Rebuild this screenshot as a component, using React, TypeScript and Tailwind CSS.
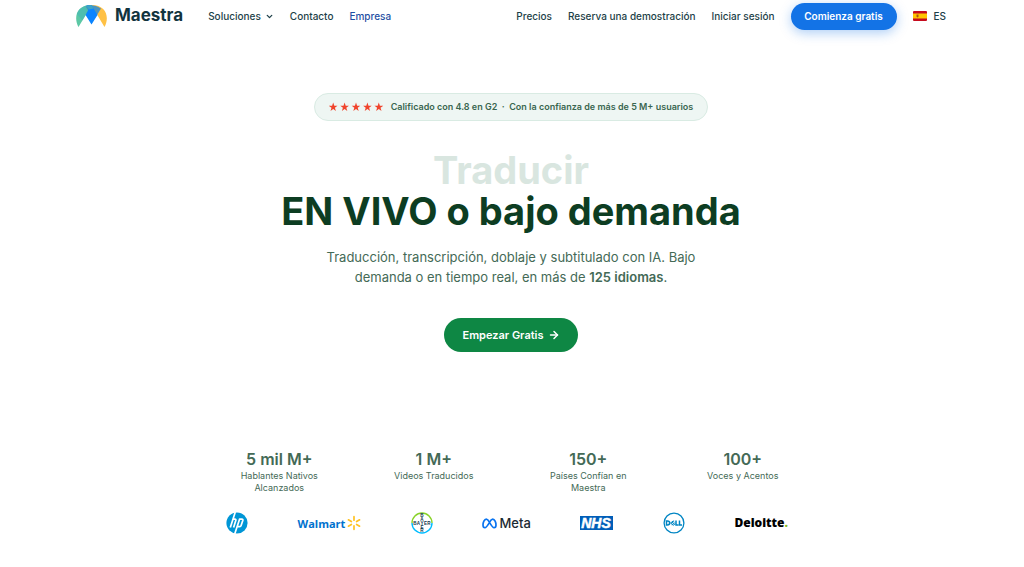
import { ReactNode } from 'react'
import { ArrowRight, ChevronDown } from 'lucide-react'

const stats = [
  { value: '5 mil M+', label: 'Hablantes Nativos Alcanzados' },
  { value: '1 M+', label: 'Videos Traducidos' },
  { value: '150+', label: 'Países Confían en Maestra' },
  { value: '100+', label: 'Voces y Acentos' },
]

export default function App() {
  return (
    <div className="min-h-screen bg-white font-['Inter','Liberation_Sans',sans-serif]">
      <Header />
      <main className="flex flex-col items-center pr-4.5 pl-4">
        <Hero />
        <Stats />
        <Brands />
      </main>
    </div>
  )
}

function Header() {
  return (
    <header className="flex h-8 items-center pr-[78px] pl-19 text-[10px] font-medium text-[#1d3f48]">
      <a href="#" className="flex items-center gap-2 text-[17px] font-bold text-[#12343e]">
        <MaestraMark />
        Maestra
      </a>
      <nav className="ml-[25px] flex flex-1 items-center gap-4">
        <button type="button" className="flex items-center gap-1">
          Soluciones
          <ChevronDown size={9} strokeWidth={3.5} />
        </button>
        <NavLink>Contacto</NavLink>
        <a href="#" className="text-[#1f4fa3]">Empresa</a>
      </nav>
      <div className="flex items-center gap-4">
        <NavLink>Precios</NavLink>
        <NavLink>Reserva una demostración</NavLink>
        <NavLink>Iniciar sesión</NavLink>
        <a href="#" className="flex h-[27px] w-[106px] items-center justify-center rounded-full bg-[#1373e6] font-semibold text-white shadow-[0_3px_12px_rgba(19,115,230,0.35)]">
          Comienza gratis
        </a>
        <button type="button" className="flex items-center gap-[7px]">
          <SpainFlag />
          ES
        </button>
      </div>
    </header>
  )
}

const NavLink = ({ children }: { children: ReactNode }) => (
  <a href="#" className="whitespace-nowrap">{children}</a>
)

function Hero() {
  return (
    <section className="flex flex-col items-center pt-[61px] text-center">
      <div className="flex h-7 items-center gap-2 rounded-full border border-[#d9ebe3] bg-[#eef6f3] px-3.5 text-[9px] font-semibold text-[#3a6650]">
        <Stars />
        <span>Calificado con 4.8 en G2 &nbsp;·&nbsp; Con la confianza de más de 5 M+ usuarios</span>
      </div>
      <h1 className="mt-[29px] text-[38px] leading-[41px] font-bold text-[#0d3d22]">
        <span className="block text-[#d9e6e0]">Traducir</span>
        EN VIVO o bajo demanda
      </h1>
      <p className="mt-[15px] max-w-[390px] text-[13px] leading-5 text-[#446a56]">
        Traducción, transcripción, doblaje y subtitulado con IA. Bajo demanda o en tiempo real, en más de{' '}
        <strong className="font-semibold">125 idiomas</strong>.
      </p>
      <a href="#" className="mt-[31px] flex h-[34px] items-center gap-1 rounded-full bg-[#0e8744] px-[18px] text-[11px] font-semibold text-white">
        Empezar Gratis
        <ArrowRight size={12} strokeWidth={3} />
      </a>
    </section>
  )
}

function Stats() {
  return (
    <dl className="mt-[97px] grid w-full max-w-[618px] grid-cols-4 text-center text-[#446a56]">
      {stats.map((s) => (
        <div key={s.label} className="flex flex-col-reverse items-center justify-end">
          <dt className="max-w-24 text-[9px] leading-3">{s.label}</dt>
          <dd className="text-base leading-[21px] font-semibold">{s.value}</dd>
        </div>
      ))}
    </dl>
  )
}

function Brands() {
  return (
    <div className="mt-[18px] flex w-full max-w-[570px] items-center justify-between pr-2">
      <HpLogo />
      <WalmartLogo />
      <BayerLogo />
      <MetaLogo />
      <NhsLogo />
      <DellLogo />
      <div className="text-[12px] leading-none font-extrabold text-black font-['Open_Sans',sans-serif]">
        Deloitte<span className="text-[#86bc25]">.</span>
      </div>
    </div>
  )
}

const MaestraMark = () => (
  <svg width="31" height="24" viewBox="0 0 31 24" aria-hidden="true">
    <path d="M2.500 23C-2.500 14 0 1 15.500 1L16 6 10 10.500Z" fill="#5cc8a5" />
    <path d="M.8 10C3 4 8 1 15.500 1L10 10.500 6.500 16.500Z" fill="#46b8b3" opacity=".65" />
    <path d="M28.500 23C33.500 14 31 1 15.500 1L15 6 21 10.500Z" fill="#ffc145" />
    <path d="M9.500 2.200C13.500.6 19.500.6 25 4.500L21 11H15Z" fill="#4c93bd" />
    <path d="M10.500 1.800C12 1.200 14 1 15.500 1L21.500 11 15.500 20.500 9.500 11 12.500 5.500Z" fill="#0a84ff" />
    <path d="M10 2C12 1.200 14 1 15.500 1L17.500 4.500 13 5.500Z" fill="#3da3c5" />
  </svg>
)

const SpainFlag = () => (
  <svg width="14" height="10" viewBox="0 0 14 10" aria-hidden="true">
    <rect width="14" height="10" rx="1" fill="#c60b1e" />
    <rect y="2.500" width="14" height="5" fill="#ffc400" />
    <path d="M3.500 3.500h2v2.200l-1 .8-1-.8z" fill="#ad5118" />
  </svg>
)

const Stars = () => (
  <svg width="54" height="10" viewBox="0 0 54 10" fill="#f0442c" role="img" aria-label="5 estrellas">
    {[0, 1, 2, 3, 4].map((i) => (
      <path key={i} transform={`translate(${i * 11.4} 0)`} d="M4.200.6l1.100 3.200h3.200L5.900 5.800l1 3.200-2.700-2-2.700 2 1-3.200L-.1 3.800h3.200z" />
    ))}
  </svg>
)

const HpLogo = () => (
  <svg width="22" height="22" viewBox="0 0 22 22" role="img" aria-label="HP">
    <circle cx="11" cy="11" r="10.600" fill="#0096d6" />
    <g fill="none" stroke="#fff" strokeWidth="1.700">
      <path d="M9.300 0L4.300 15.500M6.900 7.200H8.900Q10.200 7.200 9.800 8.500L7.600 15.500" />
      <path d="M13.800 6.500L8.700 22M13.600 7.200H15.900Q17.200 7.200 16.800 8.500L15.100 13.600Q14.800 14.700 13.600 14.700H11.300" />
    </g>
  </svg>
)

const WalmartLogo = () => (
  <div className="flex items-center gap-0.5 text-[11px] leading-none font-bold text-[#0071ce] font-['Open_Sans',sans-serif]">
    Walmart
    <svg width="14" height="16" viewBox="0 0 15 16" aria-hidden="true" stroke="#ffc220" strokeWidth="1.800" strokeLinecap="round">
      <path d="M7.500 1.200V5M7.500 11V14.800M1.500 4.600L4.700 6.400M10.300 9.600L13.500 11.400M13.500 4.600L10.300 6.400M4.700 9.600L1.500 11.400" />
    </svg>
  </div>
)

const BayerLogo = () => (
  <svg width="22" height="22" viewBox="0 0 22 22" role="img" aria-label="Bayer">
    <path d="M1 11a10 10 0 0 1 20 0" fill="none" stroke="#89d329" strokeWidth="1.400" />
    <path d="M1 11a10 10 0 0 0 20 0" fill="none" stroke="#00bcff" strokeWidth="1.400" />
    <g fill="#10384f" fontFamily="Liberation Sans, sans-serif" fontSize="4.600" fontWeight="700" textAnchor="middle">
      <text x="11" y="5">B</text>
      <text x="11" y="8.800">A</text>
      <text x="4" y="12.700">B</text>
      <text x="7.500" y="12.700">A</text>
      <text x="11" y="12.700">Y</text>
      <text x="14.500" y="12.700">E</text>
      <text x="18" y="12.700">R</text>
      <text x="11" y="16.500">E</text>
      <text x="11" y="20.300">R</text>
    </g>
  </svg>
)

const MetaLogo = () => (
  <div className="flex items-center gap-0.5 text-[13px] leading-none font-medium text-[#1c2b33]">
    <svg width="15" height="11" viewBox="0 0 15 11" aria-hidden="true" fill="none" stroke="#0a74f0" strokeWidth="1.700">
      <path d="M7.500 4.300C6.300 2 5.400 1.200 4.300 1.200 2.200 1.200 1 4.700 1 7 1 8.700 1.700 9.700 2.900 9.700 4.300 9.700 5 8.700 7.500 4.300 8.700 2 9.600 1.200 10.700 1.200 12.800 1.200 14 4.700 14 7 14 8.700 13.300 9.700 12.100 9.700 10.700 9.700 10 8.700 7.500 4.300Z" />
    </svg>
    Meta
  </div>
)

const NhsLogo = () => (
  <svg width="33" height="14" viewBox="0 0 33 14" role="img" aria-label="NHS">
    <rect width="33" height="14" fill="#005eb8" />
    <text x="16" y="12" fill="#fff" stroke="#fff" strokeWidth=".5" fontFamily="Liberation Sans, sans-serif" fontSize="14" fontWeight="700" fontStyle="italic" textAnchor="middle">NHS</text>
  </svg>
)

const DellLogo = () => (
  <svg width="22" height="22" viewBox="0 0 22 22" role="img" aria-label="Dell">
    <circle cx="11" cy="11" r="9.900" fill="none" stroke="#0085c3" strokeWidth="1.300" />
    <g fill="none" stroke="#0085c3" strokeWidth="1.500">
      <path d="M3.500 9.100V12.900H4.500Q6.700 12.900 6.700 11T4.500 9.100Z" />
      <path d="M11.200 9.300L8.300 11.300M11.700 10.800L8.800 12.800M10.500 8.700L7.600 11 10.200 13.300 12.300 11.700" strokeWidth="1" />
      <path d="M13 8.400V12.900H15.500M16.500 8.400V12.900H19" />
    </g>
  </svg>
)
